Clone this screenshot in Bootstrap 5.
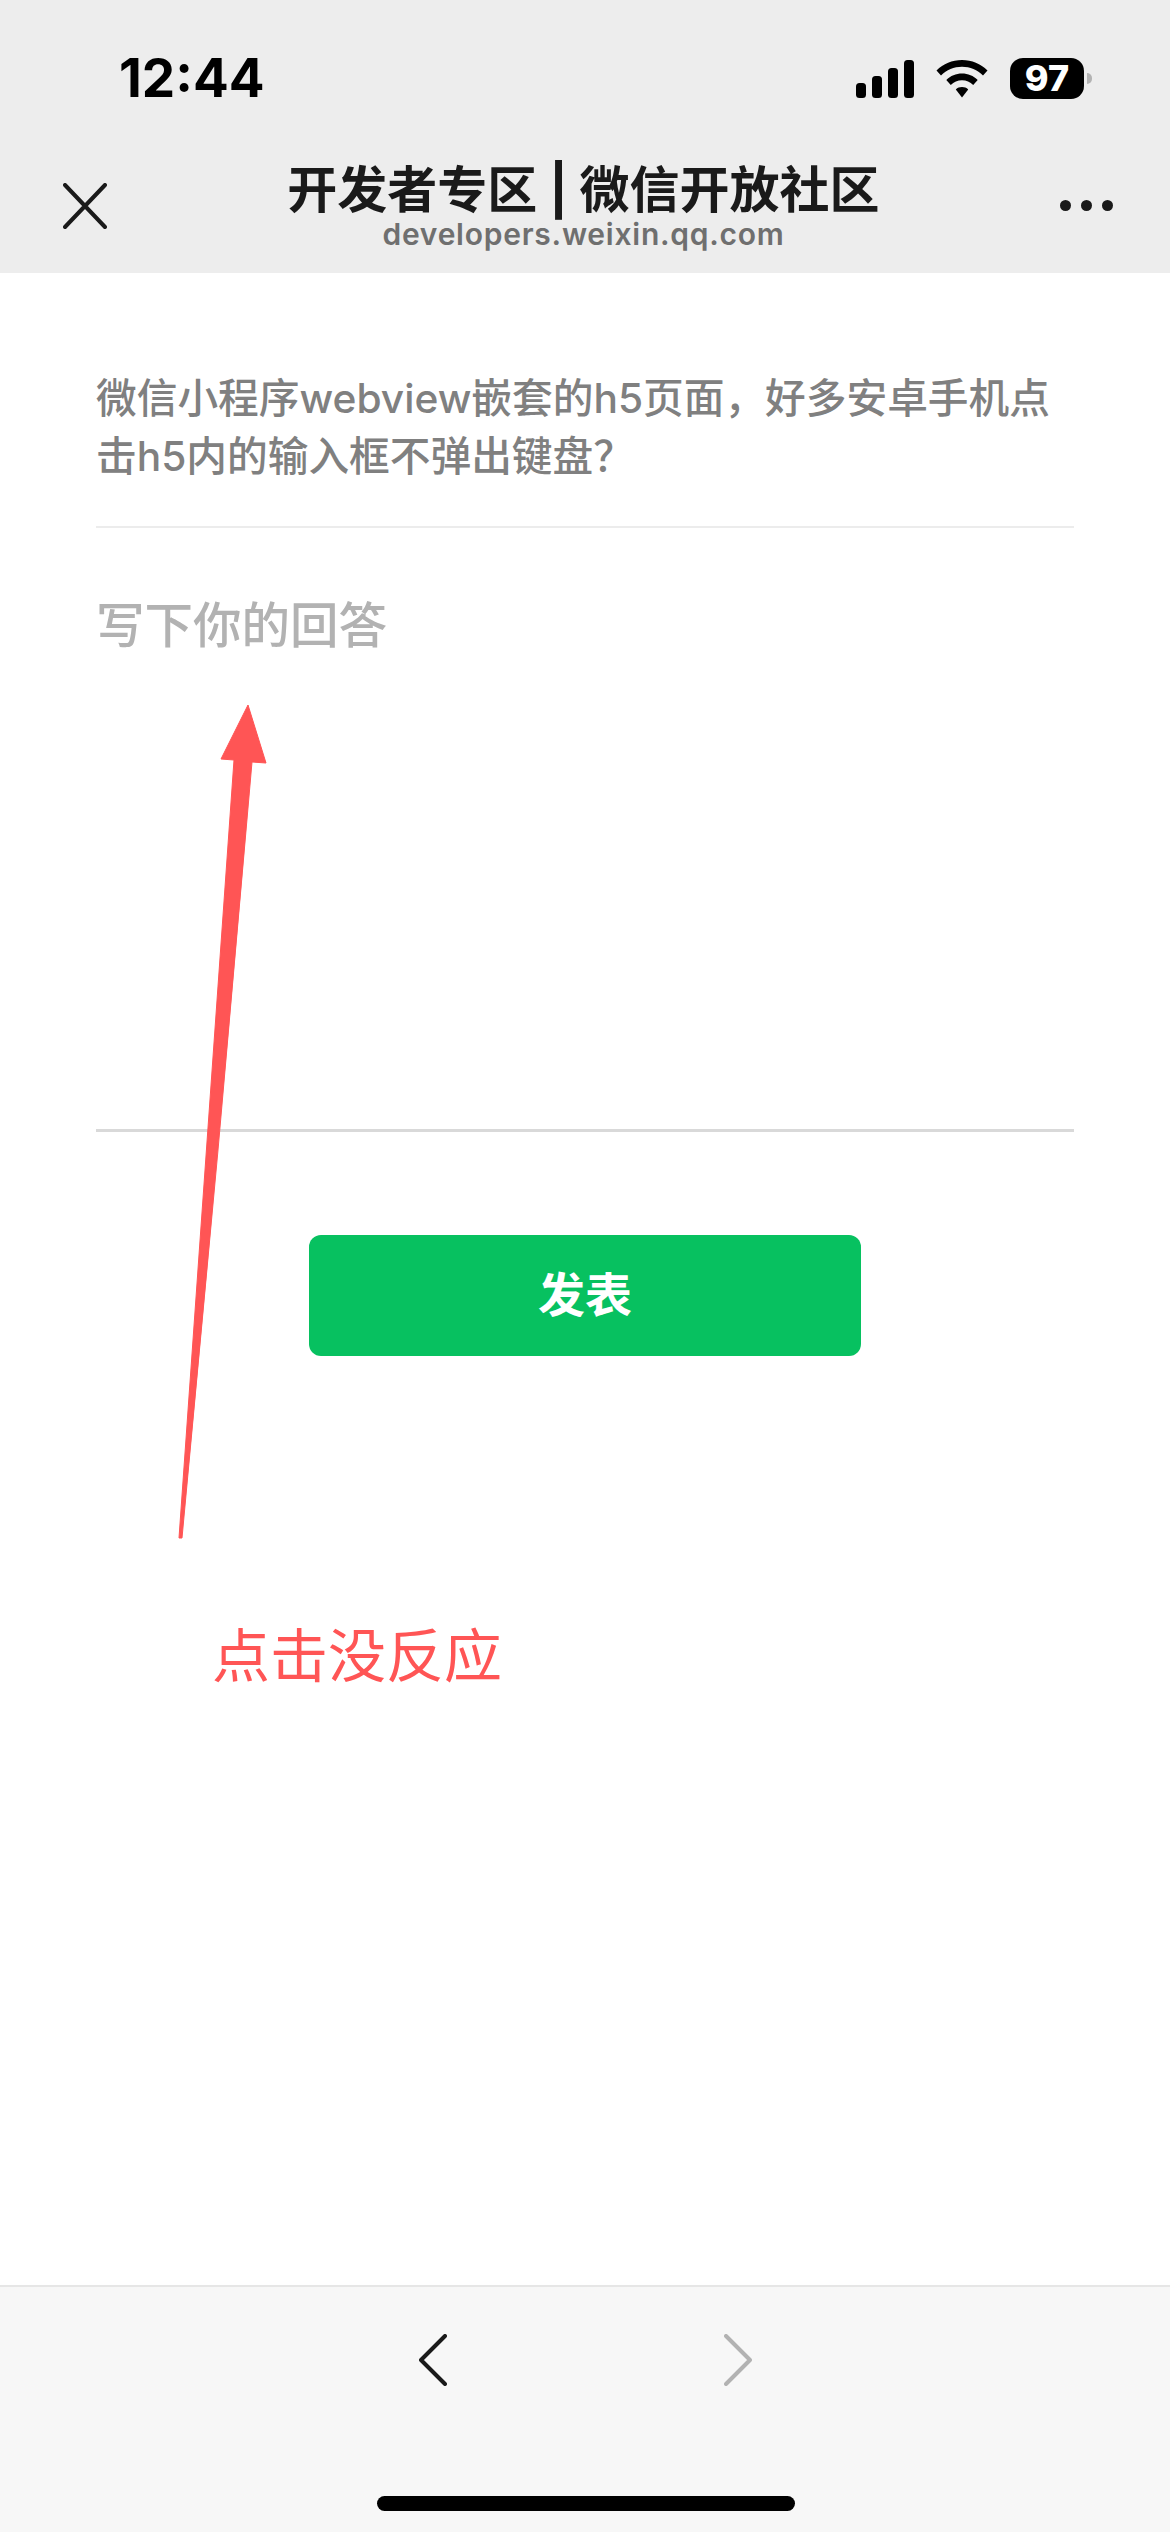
<!DOCTYPE html>
<html lang="zh">
<head>
  <meta charset="utf-8">
  <title>开发者专区 | 微信开放社区</title>
  <link rel="stylesheet" href="https://cdn.jsdelivr.net/npm/bootstrap@5.3.0/dist/css/bootstrap.min.css">
  <style>
    html, body { margin: 0; background: #fff; }
    body { font-family: Inter, "Noto Sans CJK SC", sans-serif; }
    .phone { position: relative; width: 1170px; height: 2532px; overflow: hidden; }

    .top-area { height: 273px; background: #ededed; flex: none; }
    .status-row { height: 57px; margin-top: 0; padding: 50px 78px 0 119px; box-sizing: content-box; }
    .clock { font-size: 53px; line-height: 41px; font-weight: 700; color: #000; }
    .status-icons { gap: 22px; }
    .batt { width: 74px; height: 41px; border-radius: 13px; background: #000; color: #fff; font-size: 36px; line-height: 41px; font-weight: 800; text-align: center; }
    .batt-nub { width: 5px; height: 11px; margin-left: 3px; border-radius: 0 6px 6px 0; background: #b3b3b3; }

    .title-row { height: 116px; padding: 0 57px 0 63px; }
    .close-ico { margin-top: 76px; }
    .more-ico { margin-top: 93px; }
    .title-main { font-size: 50px; line-height: 52px; font-weight: 700; color: #1a1a1a; white-space: nowrap; margin-top: 57px; }
    .title-sub { font-size: 30px; line-height: 32px; font-weight: 600; color: #6f6f6f; letter-spacing: .75px; margin-top: 2px; }

    .content-area { padding: 0 96px; }
    .question { font-size: 40.7px; line-height: 58px; font-weight: 500; color: #808080; padding: 97px 0 40px; border-bottom: 2px solid #ececec; }
    .answer-box.form-control { display: block; width: 100%; height: 604px; padding: 68px 0 0; border: 0; border-bottom: 3px solid #d9d9d9; border-radius: 0; font-size: 48.5px; font-weight: 500; line-height: 60px; color: #333; box-shadow: none; resize: none; }
    .answer-box.form-control::placeholder { color: #b2b2b2; opacity: 1; }
    .send-btn.btn { display: block; width: 552px; height: 121px; margin: 103px auto 0; border: 0; border-radius: 12px; background: #07c160; color: #fff; font-size: 47px; font-weight: 700; }

    .bottom-area { height: 247px; background: #f7f7f7; border-top: 2px solid #e6e6e6; }
    .nav-arrows { gap: 277px; padding-top: 47px; }
    .home-bar { position: absolute; left: 377px; bottom: 21px; width: 418px; height: 15px; border-radius: 8px; background: #000; }

    .note-arrow { position: absolute; left: 170px; top: 700px; }
    .note-text { position: absolute; left: 212px; top: 1616px; font-size: 58px; line-height: 80px; color: #ff5555; white-space: nowrap; }
  </style>
</head>
<body>
<div class="phone d-flex flex-column">

  <div class="top-area">
    <div class="status-row d-flex justify-content-between align-items-center">
      <div class="clock">12:44</div>
      <div class="status-icons d-flex align-items-center">
        <svg width="58" height="38" viewBox="0 0 58 38" fill="#000">
          <rect x="0" y="23" width="10" height="15" rx="3.5"/>
          <rect x="16" y="16" width="10" height="22" rx="3.5"/>
          <rect x="32" y="8" width="10" height="30" rx="3.5"/>
          <rect x="48" y="0" width="10" height="38" rx="3.5"/>
        </svg>
        <svg width="52" height="38" viewBox="0 0 52 38" fill="#000">
          <path d="M26 0C16 0 7.500 3.800 0.500 10.500L5 15.500C10.500 10 18 6.800 26 6.800S41.500 10 47 15.500L51.500 10.500C44.500 3.800 36 0 26 0Z"/>
          <path d="M26 13.500C20 13.500 14.500 15.800 10.300 20L14.800 25C17.800 22 21.700 20.300 26 20.300S34.200 22 37.200 25L41.700 20C37.500 15.800 32 13.500 26 13.500Z"/>
          <path d="M26 27C23.500 27 21.500 27.800 19.800 29.400L26 37.500L32.200 29.400C30.500 27.800 28.500 27 26 27Z"/>
        </svg>
        <div class="d-flex align-items-center">
          <div class="batt">97</div>
          <div class="batt-nub"></div>
        </div>
      </div>
    </div>

    <div class="title-row d-flex justify-content-between align-items-start">
      <svg class="close-ico" width="44" height="46" viewBox="0 0 44 46" fill="none" stroke="#1a1a1a" stroke-width="4" stroke-linecap="round">
        <path d="M2 2L42 44M42 2L2 44"/>
      </svg>
      <div class="text-center">
        <div class="title-main">开发者专区 | 微信开放社区</div>
        <div class="title-sub">developers.weixin.qq.com</div>
      </div>
      <svg class="more-ico" width="53" height="11" viewBox="0 0 53 11" fill="#1a1a1a">
        <circle cx="5.500" cy="5.500" r="5.500"/>
        <circle cx="26.500" cy="5.500" r="5.500"/>
        <circle cx="47.500" cy="5.500" r="5.500"/>
      </svg>
    </div>
  </div>

  <div class="content-area flex-grow-1">
    <div class="question">微信小程序webview嵌套的h5页面，好多安卓手机点击h5内的输入框不弹出键盘？</div>
    <textarea class="answer-box form-control" placeholder="写下你的回答"></textarea>
    <button type="button" class="send-btn btn">发表</button>
  </div>

  <div class="bottom-area">
    <div class="nav-arrows d-flex justify-content-center">
      <svg width="28" height="52" viewBox="0 0 28 52" fill="none" stroke="#1a1a1a" stroke-width="4" stroke-linecap="round" stroke-linejoin="round">
        <path d="M26 2L2 26L26 50"/>
      </svg>
      <svg width="28" height="52" viewBox="0 0 28 52" fill="none" stroke="#b2b2b2" stroke-width="4" stroke-linecap="round" stroke-linejoin="round">
        <path d="M2 2L26 26L2 50"/>
      </svg>
    </div>
    <div class="home-bar"></div>
  </div>

  <svg class="note-arrow" width="110" height="845" viewBox="170 700 110 845" fill="#ff5555">
    <path d="M248 705L266 763L252 762Q219 1150 182 1538L179 1538L234 760L221 759Z" stroke="#ff5555" stroke-width="1" stroke-linejoin="round"/>
  </svg>
  <div class="note-text">点击没反应</div>
</div>
<script src="https://cdn.jsdelivr.net/npm/bootstrap@5.3.0/dist/js/bootstrap.bundle.min.js"></script>
</body>
</html>
